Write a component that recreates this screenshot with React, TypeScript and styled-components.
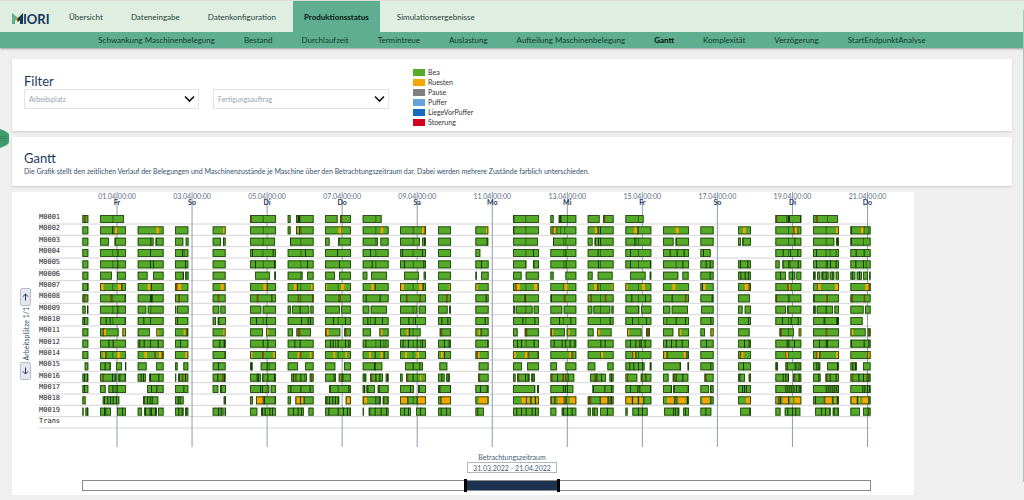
import React, { useState } from "react";
import styled, { createGlobalStyle, css } from "styled-components";

const GlobalStyle = createGlobalStyle`
  * { box-sizing: border-box; }
  body {
    margin: 0;
    background: #efefef;
    color: #1d3a5c;
    font-family: Lato, "Liberation Sans", sans-serif;
    font-size: 7px;
  }
`;

const Page = styled.div`
  position: relative;
  min-height: 100vh;
  padding-bottom: 5px;
  border-top: 1px solid #e2e2e2;
`;

const Header = styled.header`
  box-shadow: 0 1px 2px rgba(0, 0, 0, 0.35);
`;

const MainNav = styled.nav`
  display: flex;
  align-items: stretch;
  gap: 6px;
  height: 31px;
  padding-left: 11px;
  background: #e0eee1;
`;

const Logo = styled.a`
  display: flex;
  align-items: center;
  width: 41px;
`;

const NavLink = styled.a<{ $active?: boolean }>`
  display: flex;
  align-items: center;
  padding: 0 11px;
  color: #24403a;
  font-size: 8px;
  line-height: 12px;
  text-decoration: none;
  white-space: nowrap;
  ${(p) => p.$active && css`
    background: #60ae92;
    color: #041a14;
    font-weight: 700;
  `}
`;

const SubNav = styled.nav`
  display: flex;
  align-items: center;
  justify-content: center;
  gap: 7px;
  height: 16px;
  background: #60ae92;
`;

const SubLink = styled(NavLink)`
  color: #0d3a2d;
  ${(p) => p.$active && css`color: #02120d;`}
`;

const Main = styled.main`
  display: flex;
  flex-direction: column;
  gap: 6px;
  padding: 11px 12px 0;
`;

const Card = styled.section`
  padding: 14px 12px 9px;
  background: #fff;
  box-shadow: 0 1px 2px rgba(0, 0, 0, 0.15);
`;

const FilterCard = styled(Card)`
  display: flex;
  gap: 24px;
  padding-top: 8px;
  padding-bottom: 4px;
`;

const Title = styled.h2`
  margin: 0;
  font-size: 13px;
  font-weight: 400;
  line-height: 15px;
`;

const Intro = styled.p`
  margin: 0;
  color: #35506f;
  line-height: 11px;
`;

const Filters = styled.div`
  display: grid;
  grid-template-columns: 175px 176px;
  column-gap: 14px;
  align-content: start;
  padding-top: 7px;
`;

const FilterTitle = styled(Title)`
  grid-column: 1 / -1;
`;

const SelectBox = styled.label`
  display: grid;
  align-items: center;
  & > * { grid-area: 1 / 1; }
  svg { justify-self: end; margin-right: 4px; pointer-events: none; }
`;

const Select = styled.select`
  width: 100%;
  height: 20px;
  padding: 0 4px;
  appearance: none;
  border: 1px solid #e4e4e6;
  border-radius: 0;
  background: #fff;
  color: #93a1b3;
  font: inherit;
`;

const Legend = styled.ul`
  margin: 0;
  padding: 0;
  list-style: none;
`;

const LegendItem = styled.li<{ $color: string }>`
  display: flex;
  align-items: center;
  gap: 3px;
  height: 10px;
  color: #333;
  line-height: 8px;
  &::before {
    content: "";
    width: 12px;
    height: 7px;
    background: ${(p) => p.$color};
  }
`;

const ChartCard = styled.section`
  display: grid;
  grid-template-columns: 27px minmax(0, 1fr);
  width: 90.2%;
  background: #fff;
`;

const Pager = styled.div`
  display: flex;
  flex-direction: column;
  align-items: center;
  gap: 1px;
  padding-top: 96px;
`;

const PagerLabel = styled.span`
  writing-mode: vertical-rl;
  transform: rotate(180deg);
  color: #35506f;
  line-height: 10px;
  white-space: nowrap;
`;

const PagerButton = styled.button`
  display: grid;
  place-items: center;
  width: 11px;
  height: 18px;
  padding: 0;
  border: 1px solid #b9bcc9;
  border-radius: 2px;
  background: #e6e7ee;
`;

const Chart = styled.svg`
  display: block;
  width: 100%;
  height: auto;
`;

const AxisText = styled.text<{ $bold?: boolean }>`
  fill: ${(p) => (p.$bold ? "#1d3a5c" : "#5a6c82")};
  font-size: 7px;
  font-weight: ${(p) => (p.$bold ? 700 : 400)};
  text-anchor: middle;
`;

const RowLabel = styled.text`
  fill: #222;
  font-family: "DejaVu Sans Mono", monospace;
  font-size: 7px;
`;

const Period = styled.div`
  grid-column: 1 / -1;
  padding: 5px 43px 4px 70px;
`;

const PeriodCaption = styled.div`
  display: flex;
  flex-direction: column;
  align-items: center;
  width: 90px;
  transform: translateX(-50%);
`;

const PeriodLabel = styled.label`
  color: #4a5d76;
  line-height: 9px;
`;

const PeriodInput = styled.input`
  width: 100%;
  height: 11px;
  padding: 0;
  border: 1px solid #b4b8bd;
  background: #fff;
  color: #4a5d76;
  font: inherit;
  text-align: center;
`;

const Range = styled.div`
  display: grid;
  height: 11px;
  margin-top: 7px;
  border: 1px solid #8a8a8a;
`;

const Thumb = styled.input`
  grid-area: 1 / 1;
  width: 100%;
  height: 9px;
  margin: 0;
  appearance: none;
  background: transparent;
  pointer-events: none;
  &::-webkit-slider-thumb {
    width: 3px;
    height: 13px;
    appearance: none;
    background: #000;
    pointer-events: auto;
  }
`;

const Help = styled.button`
  position: absolute;
  top: 128px;
  left: 0;
  width: 10px;
  height: 19px;
  padding: 0;
  border: 0;
  background: none;
  svg { display: block; }
`;

const DrawerEdge = styled.div`
  position: absolute;
  top: 9px;
  right: 0;
  bottom: 18px;
  width: 1px;
  background: #9fccb9;
`;

const NAV = ["Übersicht", "Dateneingabe", "Datenkonfiguration", "Produktionsstatus", "Simulationsergebnisse"];
const SUBNAV = [
  "Schwankung Maschinenbelegung", "Bestand", "Durchlaufzeit", "Termintreue", "Auslastung",
  "Aufteilung Maschinenbelegung", "Gantt", "Komplexität", "Verzögerung", "StartEndpunktAnalyse",
];
const LEGEND: [string, string][] = [
  ["Bea", "#55aa28"], ["Ruesten", "#f7a600"], ["Pause", "#808080"],
  ["Puffer", "#66a3dd"], ["LiegeVorPuffer", "#1769bd"], ["Stoerung", "#d0021b"],
];
const TICKS: [string, string][] = [
  ["01.04 00:00", "Fr"], ["03.04 00:00", "So"], ["05.04 00:00", "Di"], ["07.04 00:00", "Do"],
  ["09.04 00:00", "Sa"], ["11.04 00:00", "Mo"], ["13.04 00:00", "Mi"], ["15.04 00:00", "Fr"],
  ["17.04 00:00", "So"], ["19.04 00:00", "Di"], ["21.04 00:00", "Do"],
];

/* Start of each shift on the time axis; one unit is a third of a chart unit. */
const SHIFTS = [
  247, 300, 413, 525, 638, 750, 863, 975, 1088, 1200, 1314,
  1426, 1539, 1651, 1763, 1876, 1989, 2101, 2214, 2326, 2439, 2551,
];

/*
 * One entry per machine, shifts separated by "/", blocks by "+".
 * A block is start-end, then its markers: k and d order changes,
 * r short set-up, o set-up with an optional length after the dot.
 */
const MACHINES: [string, string][] = [
  ["M0001", "0-18r5/0-72d37////0-78r1d38/0-9+25-78k30.8/0-38+45-78r46.6/0-57d38////0-78k1d37/0-10+25-78k27.6d50/0-36+46-78r48/0-55d38////0-36r1+36-78k38.6k74/0-75d8r9d42/"],
  ["M0002", "0-18/0-78k36d41o44.7/0-78o56.8/0-40/0-39o31.6/0-78d38/0-9+25-78o30.6k34d38/0-78o40.8/0-78d38o54.8/0-78d38o66.8k74/0-39/0-39o32.6/0-78k1d37/0-78r6o10.6d18d29d42/0-78o21.8k30k37/0-78o26.9d35d38/0-78o38.9/0-40/0-39o15.8/0-78d38r53o58.7d66/0-78d38o69.6/0-61k2o32.8d40d52"],
  ["M0003", "0-18/0-27+44-78k44/0-48k38+54-78k54/0-25+32-41/0-25+31-39k31/0-75d38/7-78k7d38/0-14+40-78k40/0-46d38+53-78/0-60d38+66-78k72/0-39/0-39k34/0-75d37/8-78k8d39d45/0-15+21-78k21k31k37/0-78k27d31d38/0-32+38-78k38/0-40/0-9+13-39k13/0-78d38k57/0-64d38+69-78k72/0-61k2d38"],
  ["M0004", "0-18/0-78d37k52/0-78k37/0-40k21d26/0-39/0-78k6d37k68/0-78d38k52/0-78k36/0-78k22d38/0-78k6d38k66/0-39/0-15/0-78d37k60/0-78d39k45/0-78k30d37/0-78k14d38/0-78k20k41k62/0-31k8//0-78k22d38k44k66/0-78k9d38d50d68/0-61k16k40"],
  ["M0005", "0-18/0-78d37k52/0-78k37k46/0-40k30/0-39/0-78k15d38k72/0-78d38k58/0-78k42/0-78k27d38/0-78k12d38k70/0-39/0-40k17/0-40d37+60-78k61/0-78d39k46/0-78k31d37/0-78k14d38k74/0-78d38k58/0-40k16k28/0-39k6k28/0-13+21-78d22k39d43k67/0-78k9d38k41k51k68/0-61k15k38d46"],
  ["M0006", "0-18/0-36+51-78/0-30+46-78/0-26k24+31-41k31/0-39/15-60+73-78k74/0-45d38+58-78/0-30+42-78/0-14+25-73/12-57+71-78/0-39/0-5+17-40/0-26+38-78/0-10+45-78/0-15+30-75/14-61+73-78k74/0-46+58-77/0-40k28/0-39k7k20k30/0-32k14+40-60k50+63-78/0-8k2+12-22+25-47k28k38+50-64k58+68-78/0-15k5+19-35k26+38-53+56-61"],
  ["M0007", "0-18k15/0-78o3.8d37o54.9k64/0-78o30.8k40/0-40r3o8.11/0-39o24.9/0-78o40.11k50/0-78o18.9k28d38o70.6/0-78o2.4d38o48.10/0-78o26.9k36/0-78o3.9d38o57.9k68/0-39o34.4/0-40o2.5/0-78r7o11.10d37o63.9/0-78d38o42.9/0-78o19.9k29d37o72.4/0-78o2.5d38o50.9/0-78o28.9/0-40k5o8.8/0-39o20.11r32/0-78r36o41.6d45/0-78r12o15.8o66.9/0-61o45.9r55"],
  ["M0008", "0-18r4/0-78r31d37k74/0-78k37.8/0-40r10/0-39r15/0-78r20k64/0-78r30d38r73/0-78d40r43/0-78k9k51/0-78r18r58/0-39r24/0-40k31/0-78r33k36/0-78k2r40.6/0-78r8d37r51/0-78k18d38k59/0-78k26r66/0-40k34/0-36/0-78r1k39/0-78k2r40/0-61r3r40"],
  ["M0009", "0-10+14-18k14/0-78d37k52/0-26+30-78d38/0-4+6-41/0-20+23-39/0-34+38-78/0-10+13-65k36+68-78/0-45+48-78/0-20+24-73/0-52d38+56-78/0-29+33-39/0-40/0-6+8-59d37+62-78/0-36+40-78/0-14+17-68d37+71-78/0-42d38+47-78/0-22+26-75/2-40/0-14+20-39/0-32+36-78k36/0-8k4+11-60k38+64-78/0-40+44-61"],
  ["M0010", "0-18k5/0-78k17k29d37k74/0-78k17k37/0-40k6/0-10+15-40k17/0-78k18d38k48/0-78k40k60k67/0-78k24d38k60/0-78k14d22k36k58/0-78k25d38k45/0-39k10k28/0-40k28/0-78k28d37k64/0-78k26d38k60/0-78d37k66/0-78k20d38k62/0-78d10k38k66/0-40k30/0-39k30/0-78k20d38k46k67/0-78d31k34k70.8/0-37"],
  ["M0011", "0-18/0-56r8o12.6+67-78o70.4/0-37+56-78o58.5/0-40o26.5k35/0-39o32.6/0-39+48-78o51.4/0-16+26-70r30.8/0-46r2o5.6+57-78r60.5/0-25+50-78o54.5/0-62o20.5k27d38/5-39r7.6/0-40o10.5k16/0-14+35-78r36.7/0-44r1o5.4+49-78o53.5/0-18+28-72o30.6/5-49o7.5+62-74r64.8/0-31+46-78o50.5/0-14+30-40o33.5/0-35/12-56r14.6d38+70-78o72.5/0-78r38.5/0-46o4.5+52-61r55"],
  ["M0012", "0-18/0-78k25k38/0-78k5k18k37k60/0-40k15/0-39k20k33.5/0-78k38k52/0-78k20k36/0-78k15k23d30k38k60k70/0-78k8d38k52d62d68/0-78k8k24d38k50d60k66/0-39k18k32/0-40k36/0-78k12k24d38k62/0-78k10k34k44k58k72/0-78k38k51/0-78k14k30k42k46k58/0-78k9k24k38k56/0-40k17/0-39k18k32/0-78k34k39k56/0-78k18k38k42/0-61k2k40k54"],
  ["M0014", "0-18/0-78o10.6k16d37o52.9/0-78o20.8r50o64.7r72/0-40o31.7/0-39k36/0-78o2.5r36.6o70.5/0-78o30.6r36o66.5/0-78o25.6d38o61.5/0-78o19.6k36o54.6k63/0-78o15.6d38o50.7/0-39o9.7k18/0-40r4o8.5/0-78o2.7o36.7r44r73/0-78o57.5r63/0-78d37o40.6/0-78r20o24.5k30d38/0-78o4.7k11o62.7k70/0-40/0-39r6o10.6/0-78r30o33.5d38/0-78r9o13.6k19o69.6/0-61r50o54.5"],
  ["M0015", "7-18/0-33k14d28+48-66+75-78k75/0-27+55-78/0-8+25-40/0-39k16/0-8k3+32-78k50d56/0-31+52-78/0-31+57-78/0-59k34.5/15-69k38k58/4-28/10-40/0-27+42-78/0-20+45-78/0-23+59-78/0-58k12k24k38k50+73-78k75/0-54k50+74-78k74/0-40k30/0-39k15/0-8k3+30-78k34k58d63d69d73/0-22k10k16+42-78k72/0-20k6k14+38-61"],
  ["M0016", "0-18k5k14/0-50r7.5k36k44+53-78k58k74/0-25k9k16+34-78k37k62/0-3+9-40k11r20k30/0-39k14r28k34/0-33k20k24+36-78k37k52k72/10-58k16r22k38d50+66-78r69/0-33k26+41-78r48k52/0-11k5+22-61r24k38k50+69-78k73/0-8+18-78r20k38d50o60.4/0-20k10+24-36k29/8-40r10.5/0-8+12-50r14.5k36k44+54-66k58/0-72r2k20r36r44k52/7-55r20k26k40+65-78k70/0-36r5.4+46-78r48k60/0-17+29-76r31k38k58/12-40r14.5/0-21k4+32-39r34/0-40k22k30k38+53-78r55.5k70/0-23k16+37-78r39k50k68/0-61r4k24k38r48k54"],
  ["M0017", "0-18k5/0-17+25-78k37d44k50/28-78k40k56/0-40k25/0-17+22-40k24/0-58k30k36d50+62-78/0-78k8k38k66/12-78k14d38k70/0-8k4+11-37k14+45-78k48/0-42k30+54-78k56/0-39k4k36/0-40k14k34/0-66k64+72-78k74/0-69k38k44k50/14-78k16k50k70/0-78k14k36k42k74/0-26k24+30-78k32k74/0-26+29-40k30/0-39k12k18k24/0-78k30k36k42k48k54k62k70k75/0-78k38k44k50k56k62k68k74/0-61k36k42k50k56"],
  ["M0018", "0-10/8-58k12k22k30k38k48/16-62k18k28k36k42/0-26k8k14/33-40k36/0-9+18-78o20.18r38k42k74/0-10+23-78o26.13k37o40.8k48/0-43k4k12k22k30k38+62-78o64.13/0-55r1o3.10k38k48+60-78k62r72/0-78o3.18k22d38k50o54.22/0-39r6o12.25/0-40o10.25/0-78o26.12k40o42.8k52o58.6k66o70.6/0-78r2o6.3k12o22.20r40k46o58.18/0-78r2r6k36o40.18k60r66k70/0-78o2.16k20o24.12k38o42.10k54/0-78o12.20k34r38o46.22k72/0-40o6.22k30/0-39o24.14/0-78o2.4r8k14o22.16k38o46.6o58.18/0-78k6r32o38.18k58o64.4k72/0-61o4.14k20o26.4o36.18k54"],
  ["M0019", "0-4+9-18k14/0-33k12k16+51-78k66/0-13+19-58k22k36k40k52+61-78/0-26k10k20+30-40k32/0-33k16k24+36-40k36/0-22+33-78k36k44k58k66/0-49k16k30k40+62-78/0-78k10k38k54k66k74/0-3+18-78k20k36k54k70/0-33k12k24+48-78k60/0-39k8k24/0-26k6/0-78k10k24k38k56k66/0-18+34-78k38k50k64/0-10+13-31k18+37-78k58/0-7+21-67k38k50/3-49k30k36k44+60-78k66/0-33k15/6-39k34/0-16+28-75k36k50k60/6-52k24k36k50+59-78k62k74/0-29+38-61k52"],
  ["Trans", ""],
];

const MARKS: Record<string, { fill: string; width: number }> = {
  k: { fill: "#16330a", width: 3 },
  d: { fill: "#2f6a14", width: 3 },
  r: { fill: "#79500a", width: 5 },
  o: { fill: "#f7a600", width: 7 },
};

const ROW_PITCH = 34 / 3;
const toX = (t: number) => t / 3 - 39;

function Block({ code, shift, y }: { code: string; shift: number; y: number }) {
  const span = /^(\d+)-(\d+)/.exec(code);
  if (!span) return null;
  const start = shift + Number(span[1]);
  const end = shift + Number(span[2]);
  const marks = [...code.slice(span[0].length).matchAll(/([kdro])(\d+)(?:\.(\d+))?/g)];
  return (
    <g>
      <rect x={toX(start)} y={y} width={(end - start) / 3} height={8} fill="#55aa28" />
      {marks.map((m, i) => (
        <rect
          key={i}
          x={toX(shift + Number(m[2]))}
          y={y}
          width={Number(m[3] ?? MARKS[m[1]].width) / 3}
          height={8}
          fill={MARKS[m[1]].fill}
        />
      ))}
      <rect
        x={toX(start) + 0.5}
        y={y + 0.5}
        width={Math.max((end - start) / 3 - 1, 0.4)}
        height={7}
        fill="none"
        stroke="#1e3d14"
        strokeOpacity={0.8}
      />
    </g>
  );
}

function GanttChart() {
  return (
    <Chart viewBox="0 0 875 256" role="img" aria-label="Gantt">
      {MACHINES.map(([name], row) => {
        const y = 23 + row * ROW_PITCH;
        return (
          <g key={name}>
            <line x1="0" x2="832" y1={y + 9} y2={y + 9} stroke="#d6d6d6" />
            <RowLabel x="0" y={y + 4}>{name}</RowLabel>
          </g>
        );
      })}
      {TICKS.map(([date, day], i) => {
        const x = 78 + i * 75.05;
        return (
          <g key={date}>
            <line x1={x} x2={x} y1="0" y2="255" stroke="#8f9cab" />
            <AxisText x={x} y="7">{date}</AxisText>
            <AxisText x={x} y="13" $bold>{day}</AxisText>
          </g>
        );
      })}
      {MACHINES.map(([name, data], row) =>
        data.split("/").map((shift, s) =>
          shift.split("+").map((code, b) => (
            <Block key={`${name}-${s}-${b}`} code={code} shift={SHIFTS[s]} y={23 + row * ROW_PITCH} />
          ))
        )
      )}
    </Chart>
  );
}

function LogoMark() {
  return (
    <svg width="40" height="22" viewBox="0 0 40 22" aria-label="MIORI">
      <path d="M1 7 L4 10 V18 H1 Z" fill="#60ae92" />
      <path d="M1 7 L7 12 L5 15 L1 11 Z" fill="#60ae92" />
      <path d="M4 13 L7 11 L9 13 L7 16 Z" fill="#f7a600" />
      <path d="M12 7 V18 H9 V14 L7 16 L6 13 Z" fill="#12355b" />
      <text x="12" y="18" fill="#12355b" fontSize="13" fontWeight="700" fontFamily="Lato, sans-serif">IORI</text>
    </svg>
  );
}

function Dropdown({ label }: { label: string }) {
  return (
    <SelectBox>
      <Select aria-label={label} defaultValue="">
        <option value="">{label}</option>
      </Select>
      <svg width="11" height="8" viewBox="0 0 11 8" fill="none" stroke="#111" strokeWidth="1.6">
        <path d="M1 1.5 L5.5 6 L10 1.5" />
      </svg>
    </SelectBox>
  );
}

function Arrow({ down }: { down?: boolean }) {
  return (
    <svg width="7" height="8" viewBox="0 0 7 8" fill="none" stroke="#1d3a5c">
      <path d={down ? "M3.5 0.5 V7 M0.8 4.3 L3.5 7 L6.2 4.3" : "M3.5 7.5 V1 M0.8 3.7 L3.5 1 L6.2 3.7"} />
    </svg>
  );
}

export default function App() {
  const [from, setFrom] = useState(486);
  const [to, setTo] = useState(604);
  const fill = `linear-gradient(to right, #fff ${from / 10}%, #1b3350 ${from / 10}% ${to / 10}%, #fff ${to / 10}%)`;
  return (
    <Page>
      <GlobalStyle />
      <Header>
        <MainNav>
          <Logo href="#"><LogoMark /></Logo>
          {NAV.map((n) => <NavLink key={n} href="#" $active={n === "Produktionsstatus"}>{n}</NavLink>)}
        </MainNav>
        <SubNav>
          {SUBNAV.map((n) => <SubLink key={n} href="#" $active={n === "Gantt"}>{n}</SubLink>)}
        </SubNav>
      </Header>
      <Main>
        <FilterCard>
          <Filters>
            <FilterTitle>Filter</FilterTitle>
            <Dropdown label="Arbeitsplatz" />
            <Dropdown label="Fertigungsauftrag" />
          </Filters>
          <Legend>
            {LEGEND.map(([name, color]) => <LegendItem key={name} $color={color}>{name}</LegendItem>)}
          </Legend>
        </FilterCard>
        <Card>
          <Title>Gantt</Title>
          <Intro>
            Die Grafik stellt den zeitlichen Verlauf der Belegungen und Maschinenzustände je Maschine über den
            Betrachtungszeitraum dar. Dabei werden mehrere Zustände farblich unterschieden.
          </Intro>
        </Card>
        <ChartCard>
          <Pager>
            <PagerButton aria-label="Vorherige Arbeitsplätze"><Arrow /></PagerButton>
            <PagerLabel>Arbeitsplätze 1/1</PagerLabel>
            <PagerButton aria-label="Nächste Arbeitsplätze"><Arrow down /></PagerButton>
          </Pager>
          <GanttChart />
          <Period>
            <PeriodCaption style={{ marginLeft: `${(from + to) / 20}%` }}>
              <PeriodLabel htmlFor="period">Betrachtungszeitraum</PeriodLabel>
              <PeriodInput id="period" readOnly value="31.03.2022 - 21.04.2022" />
            </PeriodCaption>
            <Range style={{ background: fill }}>
              <Thumb type="range" aria-label="Beginn" min={0} max={1000} value={from}
                onChange={(e) => setFrom(Math.min(Number(e.target.value), to))} />
              <Thumb type="range" aria-label="Ende" min={0} max={1000} value={to}
                onChange={(e) => setTo(Math.max(Number(e.target.value), from))} />
            </Range>
          </Period>
        </ChartCard>
      </Main>
      <Help aria-label="Hilfe">
        <svg width="10" height="19" viewBox="0 0 10 19">
          <path d="M0 0 L5 2 Q9 4 9 6 V13 Q9 15 5 17 L0 19 Z" fill="#3f9c6c" />
          <path d="M0 7.5 H6 M0 9.5 H6 M0 11.5 H6" stroke="#2f8559" strokeWidth="0.7" />
        </svg>
      </Help>
      <DrawerEdge />
    </Page>
  );
}
